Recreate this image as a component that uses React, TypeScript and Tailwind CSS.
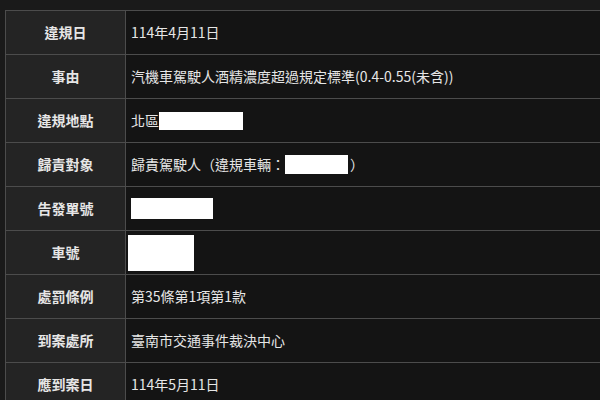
import React from 'react';

const Redact = ({ w, h }: { w: number; h: number }) => (
  <span className="inline-block bg-white align-middle" style={{ width: w, height: h }} />
);

const rows: { label: string; value: React.ReactNode }[] = [
  { label: '違規日', value: '114年4月11日' },
  { label: '事由', value: '汽機車駕駛人酒精濃度超過規定標準(0.4-0.55(未含))' },
  {
    label: '違規地點',
    value: (
      <span className="flex items-center">
        北區
        <Redact w={84} h={18} />
      </span>
    ),
  },
  {
    label: '歸責對象',
    value: (
      <span className="flex items-center">
        歸責駕駛人（違規車輛：
        <Redact w={63} h={19} />
        <span className="ml-[2px]">）</span>
      </span>
    ),
  },
  { label: '告發單號', value: <Redact w={82} h={21} /> },
  { label: '車號', value: <span className="-ml-[3px] flex"><Redact w={66} h={36} /></span> },
  { label: '處罰條例', value: '第35條第1項第1款' },
  { label: '到案處所', value: '臺南市交通事件裁決中心' },
  { label: '應到案日', value: '114年5月11日' },
];

export default function App() {
  return (
    <div
      className="h-[400px] w-[600px] overflow-hidden bg-[#1a1a1a] pl-[5px] pt-[10px]"
      style={{ fontFamily: '"Noto Sans CJK TC", "Noto Sans", sans-serif' }}
    >
      <div className="border-l border-t border-[#4c4c4c]">
        {rows.map((r) => (
          <div key={r.label} className="flex h-[44px] border-b border-[#4c4c4c]">
            <div className="flex w-[120px] shrink-0 items-center justify-center border-r border-[#4c4c4c] bg-[#242424] text-[14px] font-bold text-[#e6e6e6]">
              {r.label}
            </div>
            <div className="flex flex-1 items-center bg-[#141414] pl-[5px] text-[14px] text-[#e6e6e6]">
              {r.value}
            </div>
          </div>
        ))}
      </div>
    </div>
  );
}
